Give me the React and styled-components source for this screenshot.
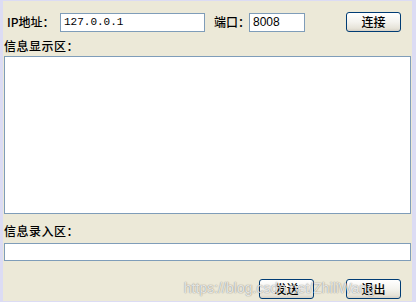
import React from "react";
import styled, { createGlobalStyle } from "styled-components";

const Global = createGlobalStyle`
  html, body { margin: 0; padding: 0; background: #dcdcf4; }
  body { width: 416px; height: 302px; overflow: hidden; }
  #root { width: 416px; height: 302px; }
`;

const Frame = styled.div`
  width: 416px;
  height: 302px;
  box-sizing: border-box;
  padding: 1px 4px 1px 3px;
  background: #dcdcf4;
`;

const Panel = styled.div`
  position: relative;
  height: 100%;
  background: #ece9d8;
  display: flex;
  flex-direction: column;
  font-family: "Noto Sans CJK SC", "Liberation Sans", sans-serif;
  font-size: 12px;
  font-weight: 500;
  color: #000;
`;

const TopRow = styled.div`
  display: flex;
  align-items: center;
  margin-top: 11px;
  padding: 0 11px 0 4px;
  height: 20px;
`;

const Label = styled.span`
  width: ${(p) => p.$w}px;
  margin-left: ${(p) => p.$ml || 0}px;
  flex: none;
  white-space: nowrap;
  line-height: 12px;
`;

const TextBox = styled.input`
  box-sizing: border-box;
  width: ${(p) => (p.$w ? `${p.$w}px` : "auto")};
  height: ${(p) => p.$h}px;
  border: 1px solid #7f9db9;
  background: #fff;
  padding: 0 3px;
  margin: 0;
  outline: none;
  font-family: ${(p) => (p.$mono ? `"Liberation Mono", "DejaVu Sans Mono", monospace` : `"Liberation Sans", sans-serif`)};
  font-size: ${(p) => (p.$mono ? 11 : 12)}px;
  color: #000;
  flex: none;
`;

const Button = styled.button`
  box-sizing: border-box;
  width: 55px;
  height: 20px;
  flex: none;
  margin-left: ${(p) => (p.$auto ? "auto" : `${p.$ml || 0}px`)};
  border: 1px solid #003c74;
  border-radius: 3px;
  background: linear-gradient(#ffffff 0%, #f4f3ee 50%, #e6e3d8 85%, #d6d0c5 100%);
  font-family: "Noto Sans CJK SC", "Liberation Sans", sans-serif;
  font-size: 12px;
  font-weight: 500;
  line-height: 12px;
  padding: 0;
  color: #000;
`;

const SectionLabel = styled.div`
  margin: ${(p) => p.$mt}px 0 0 1px;
  height: 14px;
  line-height: 14px;
  font-size: 12px;
  letter-spacing: 0.5px;
`;

const Display = styled.textarea`
  box-sizing: border-box;
  margin: ${(p) => p.$mt}px 0 0 1px;
  width: 407px;
  height: 158px;
  border: 1px solid #7f9db9;
  background: #fff;
  resize: none;
  outline: none;
  padding: 2px;
`;

const EntryBox = styled(TextBox)`
  width: 407px;
  margin: 5px 0 0 1px;
`;

const BottomRow = styled.div`
  display: flex;
  margin-top: 18px;
  padding-right: 11px;
  justify-content: flex-end;
`;

const Watermark = styled.div`
  position: absolute;
  left: 181px;
  top: 279px;
  font-family: "Liberation Sans", Arial, sans-serif;
  font-size: 14px;
  font-weight: 400;
  color: rgba(255, 255, 255, 0.8);
  text-shadow: 0 0 1px rgba(0, 0, 0, 0.45), 0 0 2px rgba(0, 0, 0, 0.15);
  pointer-events: none;
  white-space: nowrap;
`;

export default function App() {
  return (
    <>
      <Global />
      <Frame>
        <Panel>
          <TopRow>
            <Label $w={53}>IP地址：</Label>
            <TextBox $w={145} $h={19} $mono defaultValue="127.0.0.1" />
            <Label $w={35} $ml={9}>端口：</Label>
            <TextBox $w={56} $h={19} defaultValue="8008" />
            <Button $auto>连接</Button>
          </TopRow>
          <SectionLabel $mt={7}>信息显示区：</SectionLabel>
          <Display $mt={3} />
          <SectionLabel $mt={10}>信息录入区：</SectionLabel>
          <EntryBox $h={18} />
          <BottomRow>
            <Button>发送</Button>
            <Button $ml={32}>退出</Button>
          </BottomRow>
          <Watermark>https://blog.csdn.net/ZhiliWang</Watermark>
        </Panel>
      </Frame>
    </>
  );
}
